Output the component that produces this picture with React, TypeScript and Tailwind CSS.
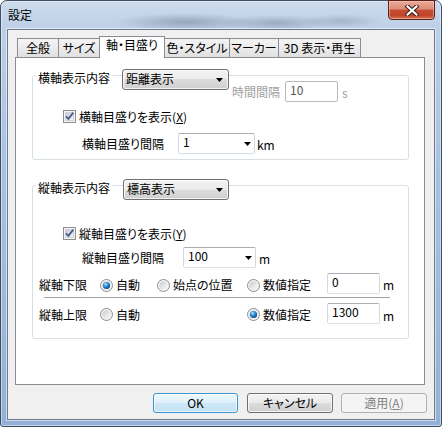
import React from "react";

function Arrow() {
  return (
    <svg width="7" height="4" viewBox="0 0 7 4" className="block shrink-0">
      <path d="M0 0H7L3.5 4Z" fill="#000" />
    </svg>
  );
}

function DropCombo({ text, w }: { text: string; w: string }) {
  return (
    <div
      className={`flex items-center justify-between h-[21px] ${w} shrink-0 border border-[#707070] rounded-[3px] bg-[linear-gradient(to_bottom,#f2f2f2_0%,#ebebeb_50%,#dddddd_50%,#cfcfcf_100%)] shadow-[inset_0_0_0_1px_rgba(255,255,255,0.75)] pl-[3px] pr-[5px]`}
    >
      <span className="leading-[14px] mb-[2px]">{text}</span>
      <Arrow />
    </div>
  );
}

function EditCombo({ text, w }: { text: string; w: string }) {
  return (
    <div
      className={`flex justify-between h-[21px] ${w} shrink-0 border border-[#abadb3] border-l-[#d5d8de] border-r-[#d5d8de] border-b-[#dde2e8] rounded-[2px] bg-white pl-[4px] pr-[3px]`}
    >
      <span className="leading-[14px] pt-[1px]">{text}</span>
      <span className="self-center">
        <Arrow />
      </span>
    </div>
  );
}

function TextBox({ text, w, disabled }: { text: string; w: string; disabled?: boolean }) {
  return (
    <div
      className={`flex h-[21px] ${w} shrink-0 border rounded-[2px] bg-white pl-[4px] ${
        disabled
          ? "border-[#b5b8bc] text-[#555555]"
          : "border-[#abadb3] border-l-[#d5d8de] border-r-[#d5d8de] border-b-[#dde2e8]"
      }`}
    >
      <span className="leading-[14px] pt-[1px]">{text}</span>
    </div>
  );
}

function CheckBox() {
  return (
    <svg width="13" height="13" viewBox="0 0 13 13" className="block shrink-0">
      <defs>
        <linearGradient id="cbg" x1="0" y1="0" x2="1" y2="1">
          <stop offset="0" stopColor="#c6cad1" />
          <stop offset="1" stopColor="#f7f7f7" />
        </linearGradient>
      </defs>
      <rect x="0.5" y="0.5" width="12" height="12" fill="#f4f4f4" stroke="#8f8f8f" />
      <rect x="2.5" y="2.5" width="8" height="8" fill="url(#cbg)" stroke="#d0d3d8" />
      <path d="M3 6.3 L5.4 8.9 L10.3 2.6" fill="none" stroke="#4b5f92" strokeWidth="1.9" />
    </svg>
  );
}

function Radio({ on }: { on?: boolean }) {
  return (
    <svg width="13" height="13" viewBox="0 0 13 13" className="block shrink-0">
      <defs>
        <linearGradient id="rbg" x1="0" y1="0" x2="1" y2="1">
          <stop offset="0" stopColor="#c8ccd2" />
          <stop offset="1" stopColor="#fbfbfb" />
        </linearGradient>
        <radialGradient id="rdot" cx="0.38" cy="0.32" r="0.75">
          <stop offset="0" stopColor="#c4efff" />
          <stop offset="0.35" stopColor="#3a9be0" />
          <stop offset="0.8" stopColor="#15599b" />
          <stop offset="1" stopColor="#0b3a6c" />
        </radialGradient>
      </defs>
      <circle cx="6.5" cy="6.5" r="6" fill="#f3f3f3" stroke="#8f8f8f" />
      <circle cx="6.5" cy="6.5" r="4.3" fill="url(#rbg)" />
      {on && <circle cx="6.5" cy="6.5" r="3.6" fill="url(#rdot)" />}
    </svg>
  );
}

const tabs = [
  { label: "全般", w: "w-[42px]" },
  { label: "サイズ", w: "w-[42px]" },
  { label: "軸・目盛り", w: "w-[66px]", active: true },
  { label: "色・スタイル", w: "w-[66px]" },
  { label: "マーカー", w: "w-[50px]" },
  { label: "3D 表示・再生", w: "w-[83px]" },
];

export default function App() {
  return (
    <div className="w-[442px] h-[427px] overflow-hidden bg-white">
      <div className="flex flex-col w-[442px] h-[427px] border border-[#3d4f66] rounded-t-[7px] rounded-b-[3px] bg-[radial-gradient(ellipse_70px_9px_at_185px_21px,rgba(70,85,105,0.35),transparent),radial-gradient(ellipse_55px_8px_at_275px_22px,rgba(70,85,105,0.3),transparent),radial-gradient(ellipse_40px_7px_at_340px_20px,rgba(80,95,115,0.25),transparent),linear-gradient(to_bottom,#cddbed_0%,#bccfe6_7%,#a8c1df_40%,#93b1d6_100%)] shadow-[inset_0_0_0_1px_rgba(255,255,255,0.45)] font-['Noto_Sans_CJK_JP',sans-serif] [font-feature-settings:'palt'] text-[12px] text-black">
        {/* title bar */}
        <div className="flex items-start justify-between h-[28px] pl-[7px] pr-[6px]">
          <span className="mt-[7px] leading-[14px]">設定</span>
          <div className="-mt-px flex items-center justify-center w-[47px] h-[20px] border border-[#5b2117] rounded-b-[4px] bg-[linear-gradient(to_bottom,#e9a898_0%,#dc8d78_45%,#c84e33_50%,#c3442a_80%,#d77a5c_100%)] shadow-[inset_0_0_0_1px_rgba(255,215,205,0.45)]">
            <svg width="14" height="11" viewBox="0 0 14 11" className="block">
              <path d="M2.5 1.5 L11.5 9.5 M11.5 1.5 L2.5 9.5" stroke="#3a1a12" strokeWidth="4.2" strokeLinecap="square" />
              <path d="M2.5 1.5 L11.5 9.5 M11.5 1.5 L2.5 9.5" stroke="#ffffff" strokeWidth="2.2" strokeLinecap="square" />
            </svg>
          </div>
        </div>

        {/* client */}
        <div className="flex-1 flex flex-col mx-[6px] mb-[6px] border border-[#6d7a8c] bg-[#f0f0f0] shadow-[0_0_0_1px_rgba(255,255,255,0.55)] pl-[7px] pt-[6px]">
          {/* tabs */}
          <div className="flex items-end h-[21px] pl-[2px]">
            {tabs.map((t, i) =>
              t.active ? (
                <div
                  key={t.label}
                  className={`relative z-10 -ml-px -mb-px flex justify-center h-[22px] ${t.w} border border-b-0 border-[#898c95] bg-white pt-[1px]`}
                >
                  <span className="leading-[14px] whitespace-nowrap">{t.label}</span>
                </div>
              ) : (
                <div
                  key={t.label}
                  className={`${i === 0 ? "" : "-ml-px"} flex items-center justify-center h-[19px] ${t.w} border border-b-0 border-[#898c95] bg-[linear-gradient(to_bottom,#f4f4f4_0%,#ebebeb_50%,#e0e0e0_100%)]`}
                >
                  <span className="leading-[14px] whitespace-nowrap">{t.label}</span>
                </div>
              )
            )}
          </div>

          {/* panel */}
          <div className="flex flex-col w-[410px] h-[328px] border border-[#898c95] bg-white pt-[8px] pl-[16px]">
            {/* group 1 */}
            <fieldset className="w-[377px] border border-[#d5dfe5] rounded-[3px] pb-[5px]">
              <legend className="ml-[3px] px-[2px] pt-[6px] leading-[12px]">横軸表示内容</legend>
              <div className="flex items-start -mt-[15px]">
                <div className="ml-[89px]">
                  <DropCombo text="距離表示" w="w-[107px]" />
                </div>
                <div className="flex items-center mt-[12px] ml-[3px]">
                  <span className="w-[53px] leading-[14px] text-[#a0a0a0]">時間間隔</span>
                  <TextBox text="10" w="w-[53px]" disabled />
                  <span className="self-end mb-[2px] ml-[4px] leading-[14px] text-[#a0a0a0]">s</span>
                </div>
              </div>
              <div className="flex items-center h-[13px] mt-[8px] ml-[30px]">
                <CheckBox />
                <span className="ml-[3px] leading-[14px]">
                  横軸目盛りを表示(<span className="underline">X</span>)
                </span>
              </div>
              <div className="flex items-center mt-[10px] ml-[49px]">
                <span className="w-[96px] leading-[14px]">横軸目盛り間隔</span>
                <EditCombo text="1" w="w-[77px]" />
                <span className="ml-[2px] mt-[3px] leading-[14px]">km</span>
              </div>
            </fieldset>

            {/* group 2 */}
            <fieldset className="mt-[16px] w-[377px] border border-[#d5dfe5] rounded-[3px] pb-[14px]">
              <legend className="ml-[3px] px-[2px] pt-[6px] leading-[12px]">縦軸表示内容</legend>
              <div className="flex items-start -mt-[15px]">
                <div className="ml-[90px]">
                  <DropCombo text="標高表示" w="w-[106px]" />
                </div>
              </div>
              <div className="flex items-center h-[13px] mt-[27px] ml-[30px]">
                <CheckBox />
                <span className="ml-[3px] leading-[14px]">
                  縦軸目盛りを表示(<span className="underline">Y</span>)
                </span>
              </div>
              <div className="flex items-center mt-[7px] ml-[49px]">
                <span className="w-[101px] leading-[14px]">縦軸目盛り間隔</span>
                <EditCombo text="100" w="w-[73px]" />
                <span className="ml-[3px] mt-[2px] leading-[14px]">m</span>
              </div>

              <div className="flex items-center h-[21px] mt-[5px] ml-[6px]">
                <div className="flex items-center mt-[3px]">
                  <span className="w-[61px] leading-[14px]">縦軸下限</span>
                  <div className="flex items-center gap-[3px] w-[57px]">
                    <Radio on />
                    <span className="leading-[14px]">自動</span>
                  </div>
                  <div className="flex items-center gap-[3px] w-[90px]">
                    <Radio />
                    <span className="leading-[14px]">始点の位置</span>
                  </div>
                  <div className="flex items-center gap-[3px] w-[80px]">
                    <Radio />
                    <span className="leading-[14px]">数値指定</span>
                  </div>
                </div>
                <TextBox text="0" w="w-[53px]" />
                <span className="self-end mb-[2px] ml-[3px] leading-[14px]">m</span>
              </div>

              <div className="ml-[11px] mt-[3px] w-[346px] h-px bg-[#a0a0a0]" />

              <div className="flex items-center h-[21px] mt-[5px] ml-[6px]">
                <div className="flex items-center mt-[2px]">
                  <span className="w-[61px] leading-[14px]">縦軸上限</span>
                  <div className="flex items-center gap-[3px] w-[147px]">
                    <Radio />
                    <span className="leading-[14px]">自動</span>
                  </div>
                  <div className="flex items-center gap-[3px] w-[80px]">
                    <Radio on />
                    <span className="leading-[14px]">数値指定</span>
                  </div>
                </div>
                <TextBox text="1300" w="w-[53px]" />
                <span className="self-end mb-[1px] ml-[3px] leading-[14px]">m</span>
              </div>
            </fieldset>
          </div>

          {/* buttons */}
          <div className="flex justify-end pr-[7px] mt-[8px]">
            <div className="flex items-center justify-center w-[85px] h-[20px] border border-[#3c95d0] rounded-[3px] bg-[linear-gradient(to_bottom,#eef7fd_0%,#dff0fa_50%,#cfe8f7_50%,#c3e2f4_100%)] shadow-[inset_0_0_0_1px_rgba(255,255,255,0.7)]">
              <span className="leading-[14px]">OK</span>
            </div>
            <div className="ml-[9px] flex items-center justify-center w-[86px] h-[20px] border border-[#707070] rounded-[3px] bg-[linear-gradient(to_bottom,#f2f2f2_0%,#ebebeb_50%,#dddddd_50%,#cfcfcf_100%)] shadow-[inset_0_0_0_1px_rgba(255,255,255,0.75)]">
              <span className="leading-[14px]">キャンセル</span>
            </div>
            <div className="ml-[8px] flex items-center justify-center w-[86px] h-[20px] border border-[#adb2b5] rounded-[3px] bg-[#f4f4f4] text-[#838383]">
              <span className="leading-[14px]">
                適用(<span className="underline">A</span>)
              </span>
            </div>
          </div>
        </div>
      </div>
    </div>
  );
}
